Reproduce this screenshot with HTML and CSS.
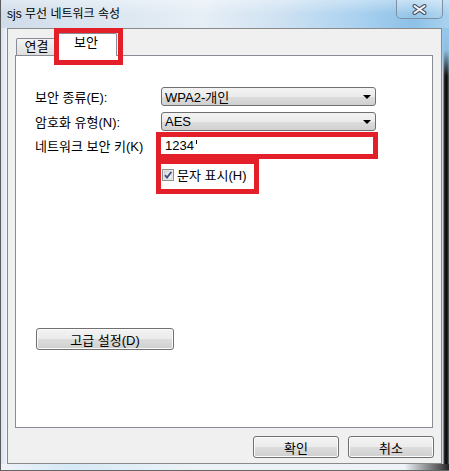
FILE: index.html
```
<!DOCTYPE html>
<html lang="ko">
<head>
<meta charset="utf-8">
<title>sjs 무선 네트워크 속성</title>
<link rel="stylesheet" href="styles.css">
</head>
<body>
<div class="window">
  <div class="titlebar">
    <span class="title">sjs 무선 네트워크 속성</span>
    <div class="close">
      <svg width="15" height="11" viewBox="0 0 15 11">
        <path d="M2.5 2 L12.5 9 M12.5 2 L2.5 9" stroke="#4a5563" stroke-width="4" stroke-linecap="round"/>
        <path d="M2.5 2 L12.5 9 M12.5 2 L2.5 9" stroke="#f4f6f8" stroke-width="2" stroke-linecap="round"/>
      </svg>
    </div>
  </div>
  <div class="middle">
    <div class="frame-l"></div>
    <div class="client">
      <div class="tabs">
        <div class="tab">연결</div>
        <div class="tab active">보안</div>
        <div class="hl-tab"></div>
      </div>
      <div class="panel">
        <div class="row r1">
          <div class="label">보안 종류(E):</div>
          <div class="combo"><span>WPA2-개인</span><i class="arrow"></i></div>
        </div>
        <div class="row r2">
          <div class="label">암호화 유형(N):</div>
          <div class="combo"><span>AES</span><i class="arrow"></i></div>
        </div>
        <div class="row r3">
          <div class="label">네트워크 보안 키(K)</div>
          <div class="keybox"><span>1234</span><span class="caret"></span></div>
        </div>
        <div class="row r4">
          <div class="showbox">
            <svg class="check" width="12" height="12" viewBox="0 0 12 12">
              <defs>
                <linearGradient id="cg" x1="0" y1="0" x2="1" y2="1">
                  <stop offset="0" stop-color="#d8d9da"/>
                  <stop offset="1" stop-color="#fbfbfb"/>
                </linearGradient>
              </defs>
              <rect x="0.5" y="0.5" width="11" height="11" fill="#fafafa" stroke="#8e8f8f"/>
              <rect x="2" y="2" width="8" height="8" fill="url(#cg)" stroke="#b8b9bb" stroke-width="0.6"/>
              <path d="M3 6.2 L5 8.6 L9.3 3" stroke="#3b4f86" stroke-width="1.8" fill="none"/>
            </svg>
            <span>문자 표시(H)</span>
          </div>
        </div>
        <div class="btn adv">고급 설정(D)</div>
      </div>
      <div class="footer">
        <div class="btn ok">확인</div>
        <div class="btn ok">취소</div>
      </div>
    </div>
    <div class="frame-r"></div>
  </div>
  <div class="frame-b"></div>
</div>
</body>
</html>
```
FILE: styles.css
```
html, body {
  margin: 0;
  padding: 0;
  background: #1e1e1e;
}
body {
  font-family: "Liberation Sans", "Noto Sans CJK KR", sans-serif;
  font-size: 13px;
  color: #000;
}
.window {
  width: 449px;
  height: 471px;
  box-sizing: border-box;
  border-left: 1px solid #5b5b5b;
  display: flex;
  flex-direction: column;
  overflow: hidden;
}
.titlebar {
  height: 28px;
  flex: none;
  display: flex;
  align-items: flex-start;
  padding: 0 6px;
  background:
    linear-gradient(180deg, rgba(255,255,255,0.35) 0, rgba(255,255,255,0) 14px),
    linear-gradient(90deg, #cfdce9 0%, #dce7f1 25%, #e6eef6 45%, #cfe2f2 62%, #a9d1ef 80%, #8cc1e8 92%, #a9d2ef 100%);
}
.title {
  margin-top: 7px;
  line-height: 14px;
  font-size: 12px;
  white-space: nowrap;
}
.close {
  margin-left: auto;
  width: 47px;
  height: 19px;
  box-sizing: border-box;
  border: 1px solid #7f8fa3;
  border-top: none;
  border-radius: 0 0 5px 5px;
  background: linear-gradient(180deg, rgba(255,255,255,0.25), rgba(255,255,255,0.05));
  display: flex;
  align-items: center;
  justify-content: center;
}
.middle {
  height: 436px;
  flex: none;
  display: flex;
}
.frame-l {
  width: 6px;
  background: linear-gradient(90deg, #d9e3ee, #eef3f8);
}
.client {
  width: 435px;
  box-sizing: border-box;
  border: 1px solid #8a8a8a;
  background: #f0f0f0;
  display: flex;
  flex-direction: column;
}
.frame-r {
  width: 7px;
  background:
    linear-gradient(180deg, rgba(150,200,235,1) 0, rgba(150,200,235,0.95) 22px, rgba(150,200,235,0) 48px),
    linear-gradient(90deg, #cfd5dc 0, #cfd5dc 1px, #3a3a3a 2px, #050505 4px, #2a2a2a 6px, #777 7px);
}
.frame-b {
  flex: 1;
  box-sizing: border-box;
  background: linear-gradient(90deg, #eef3f8 0%, #d6e9f6 15%, #eaf2f8 40%, #eef3f8 90%, #555 98%, #222 100%);
  border-bottom: 1px solid #666;
}
.tabs {
  height: 26px;
  flex: none;
  display: flex;
  align-items: flex-end;
  padding-left: 8px;
  position: relative;
}
.tab {
  height: 17px;
  width: 41px;
  box-sizing: border-box;
  border: 1px solid #898c95;
  border-bottom: none;
  border-radius: 2px 2px 0 0;
  background: linear-gradient(180deg, #f4f4f4, #dfdfdf);
  text-align: center;
  line-height: 15px;
}
.tab.active {
  height: 23px;
  width: 62px;
  margin-left: -2px;
  margin-bottom: -1px;
  background: #fff;
  position: relative;
  z-index: 1;
  line-height: 17px;
}
.hl-tab {
  position: absolute;
  left: 46px;
  top: -1px;
  width: 69px;
  height: 37px;
  box-sizing: border-box;
  border: 5px solid #e3202a;
  z-index: 2;
}
.panel {
  flex: 1;
  margin: 0 8px 0 7px;
  border: 1px solid #898c95;
  background: #fff;
  padding: 31px 0 0 19px;
}
.row {
  display: flex;
  align-items: center;
}
.label {
  width: 126px;
  flex: none;
  white-space: nowrap;
}
.r1 { height: 19px; margin-bottom: 6px; }
.r2 { height: 19px; margin-bottom: 1px; }
.r3 { height: 27px; }
.r4 { height: 35px; padding-left: 121px; }
.combo {
  width: 215px;
  height: 19px;
  box-sizing: border-box;
  border: 1px solid #707070;
  border-radius: 3px;
  background: linear-gradient(180deg, #f3f3f3 0, #ebebeb 50%, #dddddd 50%, #d0d0d0 100%);
  display: flex;
  align-items: center;
  padding-left: 3px;
}
.arrow {
  margin-left: auto;
  margin-right: 4px;
  width: 0;
  height: 0;
  border-top: 4px solid #000;
  border-left: 4px solid transparent;
  border-right: 4px solid transparent;
}
.keybox {
  margin-left: -5px;
  width: 222px;
  height: 27px;
  box-sizing: border-box;
  border: 5px solid #e3202a;
  background: #fff;
  display: flex;
  align-items: center;
  padding-left: 4px;
}
.caret {
  width: 1px;
  height: 4px;
  background: #000;
  margin-left: 2px;
  margin-top: -8px;
}
.showbox {
  width: 103px;
  height: 35px;
  box-sizing: border-box;
  border: 5px solid #e3202a;
  display: flex;
  align-items: center;
  padding: 0 0 4px 1px;
  gap: 3px;
  white-space: nowrap;
}
.check { flex: none; }
.btn {
  height: 22px;
  box-sizing: border-box;
  border: 1px solid #707070;
  border-radius: 3px;
  background: linear-gradient(180deg, #f3f3f3 0, #ebebeb 50%, #dddddd 50%, #cfcfcf 100%);
  box-shadow: inset 0 0 0 1px #fbfbfb;
  display: flex;
  align-items: center;
  justify-content: center;
  white-space: nowrap;
}
.adv {
  width: 138px;
  margin: 134px 0 0 1px;
}
.footer {
  flex: none;
  display: flex;
  justify-content: flex-end;
  gap: 9px;
  padding: 8px 7px 5px;
}
.ok { width: 86px; }
```
